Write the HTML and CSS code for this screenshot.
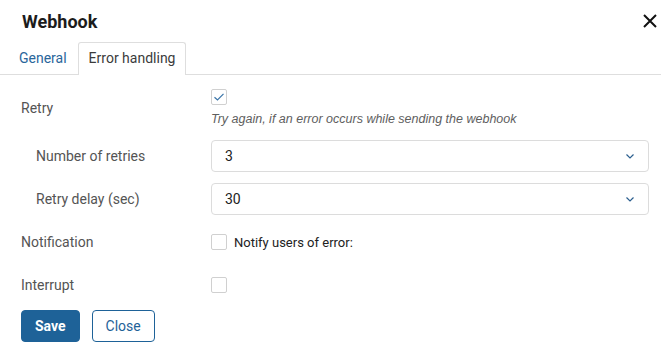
FILE: index.html
```html
<!DOCTYPE html>
<html lang="en">
<head>
    <meta charset="UTF-8">
    <meta name="viewport" content="width=device-width, initial-scale=1.0">
    <title>Webhook</title>
    <link rel="stylesheet" href="styles.css">
</head>
<body>
    <div class="modal">
        <div class="modal-header">
            <h1>Webhook</h1>
            <button class="close-x" aria-label="Close">
                <svg width="14" height="14" viewBox="0 0 14 14"><path d="M1 1L13 13M13 1L1 13" stroke="#111" stroke-width="2" fill="none"/></svg>
            </button>
        </div>
        <div class="tabs">
            <div class="tab">General</div>
            <div class="tab active">Error handling</div>
        </div>
        <form class="form">
            <div class="row row-retry">
                <label class="label">Retry</label>
                <div class="control">
                    <span class="checkbox checked">
                        <svg width="12" height="10" viewBox="0 0 12 10"><path d="M1.5 5.2L4.5 8L10.5 1.8" stroke="#3a74a8" stroke-width="1.2" fill="none"/></svg>
                    </span>
                    <div class="hint">Try again, if an error occurs while sending the webhook</div>
                </div>
            </div>
            <div class="row">
                <label class="label sub">Number of retries</label>
                <div class="control">
                    <div class="select">
                        <span>3</span>
                        <svg width="8" height="5" viewBox="0 0 8 5"><path d="M0.5 0.5L4 4L7.5 0.5" stroke="#2c5f8f" stroke-width="1.2" fill="none"/></svg>
                    </div>
                </div>
            </div>
            <div class="row">
                <label class="label sub">Retry delay (sec)</label>
                <div class="control">
                    <div class="select">
                        <span>30</span>
                        <svg width="8" height="5" viewBox="0 0 8 5"><path d="M0.5 0.5L4 4L7.5 0.5" stroke="#2c5f8f" stroke-width="1.2" fill="none"/></svg>
                    </div>
                </div>
            </div>
            <div class="row">
                <label class="label">Notification</label>
                <div class="control inline">
                    <span class="checkbox"></span>
                    <span class="check-text">Notify users of error:</span>
                </div>
            </div>
            <div class="row">
                <label class="label">Interrupt</label>
                <div class="control inline">
                    <span class="checkbox"></span>
                </div>
            </div>
            <div class="actions">
                <button type="button" class="btn btn-primary">Save</button>
                <button type="button" class="btn btn-outline">Close</button>
            </div>
        </form>
    </div>
</body>
</html>
```

FILE: styles.css
```css
body {
    margin: 0;
    background: #fff;
    font-family: Roboto, 'Liberation Sans', Arial, sans-serif;
    color: #333;
}
.modal {
    width: 661px;
    height: 346px;
    overflow: hidden;
}
.modal-header {
    display: flex;
    justify-content: space-between;
    align-items: center;
    height: 42px;
    padding: 0 4px 0 22px;
}
.modal-header h1 {
    margin: 0;
    font-size: 18px;
    font-weight: 700;
    color: #1c1c1c;
}
.close-x {
    border: none;
    background: none;
    padding: 0;
    width: 14px;
    height: 14px;
    cursor: pointer;
    display: flex;
}
.tabs {
    display: flex;
    height: 32px;
    border-bottom: 1px solid #dedede;
    padding-left: 8px;
}
.tab {
    padding: 0 10px;
    font-size: 14px;
    line-height: 31px;
    color: #2a669b;
    border: 1px solid transparent;
    border-bottom: none;
    border-radius: 3px 3px 0 0;
}
.tab.active {
    color: #3b3b3b;
    background: #fff;
    border-color: #dedede;
    margin-bottom: -1px;
    height: 32px;
}
.form {
    padding: 0 12px 0 21px;
}
.row {
    display: flex;
    align-items: center;
    min-height: 32px;
    margin-top: 11px;
}
.row-retry {
    margin-top: 14px;
}
.row-retry + .row {
    margin-top: 14px;
}
.label {
    width: 190px;
    flex-shrink: 0;
    font-size: 14px;
    color: #545454;
}
.label.sub {
    padding-left: 15px;
    width: 175px;
}
.control {
    flex: 1;
}
.control.inline {
    display: flex;
    align-items: center;
}
.checkbox {
    display: flex;
    align-items: center;
    justify-content: center;
    width: 14px;
    height: 14px;
    border: 1px solid #d0d0d0;
    border-radius: 2px;
    background: #fff;
}
.hint {
    margin-top: 7px;
    font-family: 'Liberation Sans', Arial, sans-serif;
    font-size: 12.5px;
    line-height: 14px;
    font-style: italic;
    color: #5e5e5e;
}
.check-text {
    margin-left: 7px;
    font-size: 13px;
    color: #222;
}
.select {
    display: flex;
    justify-content: space-between;
    align-items: center;
    height: 30px;
    border: 1px solid #dcdcdc;
    border-radius: 4px;
    padding: 0 14px 0 13px;
    font-size: 14px;
    color: #222;
}
.actions {
    display: flex;
    gap: 12px;
    margin-top: 9px;
}
.btn {
    height: 32px;
    padding: 0 13px;
    border-radius: 4px;
    font-family: inherit;
    font-size: 14px;
    cursor: pointer;
}
.btn-primary {
    background: #1e6298;
    border: 1px solid #1e6298;
    color: #fff;
    font-weight: 700;
}
.btn-outline {
    background: #fff;
    border: 1px solid #1e6298;
    color: #1e6298;
}
```
